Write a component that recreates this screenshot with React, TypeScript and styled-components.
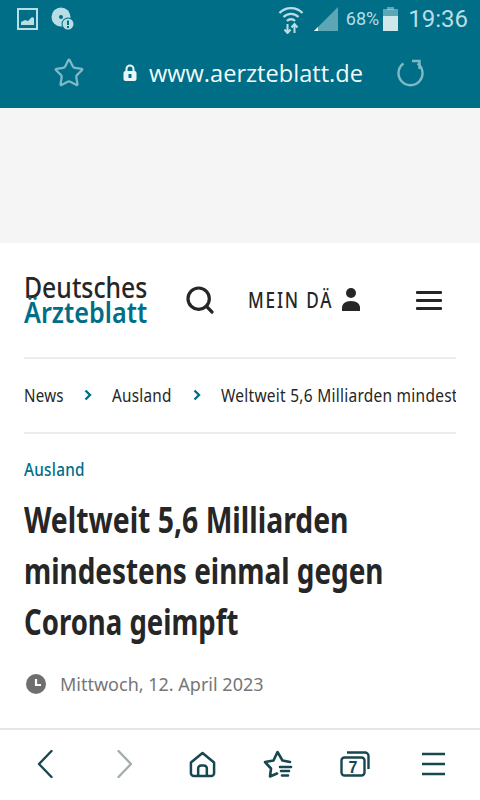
import styled, { createGlobalStyle } from "styled-components";
import { Search, Star } from "lucide-react";

const GlobalStyle = createGlobalStyle`
  html, body { margin: 0; padding: 0; background: #fff; }
  * { box-sizing: border-box; }
`;

const Page = styled.div`
  width: 480px;
  height: 800px;
  display: flex;
  flex-direction: column;
  overflow: hidden;
  font-family: "Noto Sans", sans-serif;
  color: #262626;
`;

// no condensed face is installed, so the narrow site font is squeezed by hand
const Squeezed = styled.span<{ $scale: number; $width: number }>`
  display: block;
  flex: none;
  width: ${({ $width }) => $width}px;
  white-space: nowrap;
  transform: scaleX(${({ $scale }) => $scale});
  transform-origin: left center;
`;

const TopBar = styled.header`
  height: 108px;
  background: #006e87;
  display: flex;
  flex-direction: column;
  flex: none;
`;

const StatusBar = styled.div`
  height: 37px;
  padding: 0 12px 0 17px;
  display: flex;
  align-items: center;
  color: #b9dde4;
`;

const StatusLeft = styled.div`
  display: flex;
  align-items: center;
  gap: 13px;
  flex: 1;
`;

const StatusRight = styled.div`
  display: flex;
  align-items: center;
`;

const Percent = styled.span`
  font-family: Roboto, sans-serif;
  font-size: 18px;
  margin: 0 4px 0 7px;
`;

const Clock = styled.span`
  font-family: Roboto, sans-serif;
  font-size: 24px;
  margin-left: 10px;
`;

const UrlRow = styled.div`
  height: 71px;
  padding: 0 53px;
  display: flex;
  align-items: center;
  color: #7fb9c6;
`;

const Url = styled.span`
  font-family: "Open Sans", sans-serif;
  font-size: 23.6px;
  color: #f2fafb;
  margin: 0 33px 0 12px;
  white-space: nowrap;
`;

const LockWrap = styled.span`
  display: flex;
  margin-left: 38px;
`;

const AdSlot = styled.div`
  height: 135px;
  background: #f5f5f5;
  flex: none;
`;

const Main = styled.main`
  flex: 1;
  padding: 0 24px;
  min-height: 0;
`;

const SiteHeader = styled.div`
  height: 116px;
  display: flex;
  align-items: center;
  border-bottom: 2px solid #ececec;
`;

const Logo = styled.div`
  font-weight: 500;
  font-size: 28px;
  line-height: 25px;
  width: 123px;
  margin-right: 37px;
`;

const LogoAccent = styled(Squeezed)`
  color: #006e87;
  font-weight: 600;
`;

const Account = styled.div`
  display: flex;
  align-items: center;
  margin-left: 32px;
  padding-bottom: 2px;
  font-weight: 500;
  font-size: 22px;
  letter-spacing: 2.3px;
`;

const Burger = styled.div`
  margin-left: auto;
  margin-right: 14px;
  width: 26px;
  height: 19px;
  display: flex;
  flex-direction: column;
  justify-content: space-between;
`;

const BurgerLine = styled.span`
  height: 3px;
  border-radius: 1px;
  background: #262626;
`;

const Crumbs = styled.nav`
  height: 75px;
  padding-bottom: 2px;
  display: flex;
  align-items: center;
  border-bottom: 2px solid #ececec;
  font-size: 18px;
  letter-spacing: 0.3px;
  overflow: hidden;
`;

const CrumbIcon = styled.svg`
  flex: none;
  width: 8px;
  height: 12px;
  margin: 0 20px 0 21px;
  color: #006e87;
`;

const Category = styled.div`
  margin-top: 24px;
  font-size: 18px;
  font-weight: 500;
  letter-spacing: 0.3px;
  color: #006e87;
  line-height: 22px;
`;

const Title = styled.h1`
  margin: 14px 0 0;
  font-size: 36px;
  line-height: 51px;
  font-weight: 700;
`;

const DateRow = styled.div`
  margin-top: 25px;
  display: flex;
  align-items: center;
  gap: 14px;
  padding-left: 2px;
  font-size: 18px;
  color: #767676;
`;

const BottomNav = styled.nav`
  height: 72px;
  flex: none;
  border-top: 2px solid #e6e6e6;
  background: #fff;
  padding: 0 0 2px 5px;
  display: grid;
  grid-template-columns: 80px 80px 75px 76px 78px 78px;
  align-items: center;
  justify-items: center;
`;

const NavSlot = styled.span<{ $dim?: boolean }>`
  display: flex;
  color: ${({ $dim }) => ($dim ? "#a3adaf" : "#17474f")};
`;

const PictureIcon = () => (
  <svg width="21" height="22" viewBox="0 0 21 22" fill="none">
    <rect x="1" y="1" width="19" height="20" stroke="currentColor" strokeWidth="2" />
    <path d="M4 17v-3l4-2 3 1 4-4 2 1v7z" fill="currentColor" />
  </svg>
);

const DiscIcon = () => (
  <svg width="24" height="24" viewBox="0 0 24 24">
    <circle cx="10" cy="10" r="9.500" fill="currentColor" />
    <circle cx="10" cy="10" r="2" fill="#006e87" />
    <circle cx="17" cy="17" r="6.500" fill="#006e87" />
    <circle cx="17" cy="17" r="5.500" fill="currentColor" />
    <rect x="16" y="13.500" width="2" height="4.500" fill="#006e87" />
    <rect x="16" y="19" width="2" height="2" fill="#006e87" />
  </svg>
);

const WifiIcon = () => (
  <svg width="26" height="30" viewBox="0 0 26 30" fill="none" stroke="currentColor">
    <path d="M1.500 9a16 16 0 0 1 23 0" strokeWidth="2.400" />
    <path d="M5.500 13a10.500 10.500 0 0 1 15 0" strokeWidth="2.400" />
    <path d="M9 17a5.500 5.500 0 0 1 8 0" strokeWidth="2.400" />
    <path d="M9.500 20v9M6.500 25.500l3 3.500 3-3.500M16.500 29v-9M13.500 23.500l3-3.500 3 3.500" strokeWidth="2" />
  </svg>
);

const SignalIcon = () => (
  <svg width="26" height="26" viewBox="0 0 26 26" style={{ marginLeft: 9 }}>
    <path d="M25 1v24H1z" fill="currentColor" opacity="0.5" />
    <path d="M1 25l4-4v4z" fill="#fff" />
  </svg>
);

const BatteryIcon = () => (
  <svg width="15" height="24" viewBox="0 0 15 24">
    <rect x="4" y="0" width="7" height="3" fill="currentColor" opacity="0.5" />
    <rect x="0" y="2" width="15" height="7" fill="currentColor" opacity="0.5" />
    <rect x="0" y="9" width="15" height="15" fill="#cfe6ea" />
  </svg>
);

const LockIcon = () => (
  <svg width="14" height="18" viewBox="0 0 14 18">
    <path d="M3.500 8V5a3.500 3.500 0 0 1 7 0v3" fill="none" stroke="#eaf5f7" strokeWidth="2" />
    <rect x="0.500" y="7" width="13" height="10" rx="2" fill="#eaf5f7" />
    <rect x="5.500" y="10" width="3" height="4" fill="#006e87" />
  </svg>
);

const ReloadIcon = () => (
  <svg width="28" height="28" viewBox="0 0 28 28" fill="none" stroke="currentColor" strokeWidth="2.400">
    <path d="M7.500 4.500a12 12 0 1 0 14 0" />
    <path d="M16 2h7.500v8" />
  </svg>
);

const UserIcon = () => (
  <svg width="18" height="23" viewBox="0 0 18 23" fill="currentColor" style={{ marginLeft: 11 }}>
    <circle cx="9" cy="5" r="5" />
    <path d="M0 23v-3c0-4 3-7 9-7s9 3 9 7v3z" />
  </svg>
);

const ClockIcon = () => (
  <svg width="20" height="20" viewBox="0 0 20 20">
    <circle cx="10" cy="10" r="10" fill="#6f6f6f" />
    <path d="M10 5v6h5" fill="none" stroke="#fff" strokeWidth="2.200" />
  </svg>
);

const Crumb = () => (
  <CrumbIcon viewBox="0 0 8 12" fill="none" stroke="currentColor" strokeWidth="2.400">
    <path d="M1.500 1.500L6 6l-4.500 4.500" />
  </CrumbIcon>
);

const BackIcon = () => (
  <svg width="16" height="30" viewBox="0 0 16 30" fill="none" stroke="currentColor" strokeWidth="2.400" strokeLinecap="round" strokeLinejoin="round">
    <path d="M14.500 2L2 15l12.500 13" />
  </svg>
);

const ForwardIcon = () => (
  <svg width="16" height="30" viewBox="0 0 16 30" fill="none" stroke="currentColor" strokeWidth="2.400" strokeLinecap="round" strokeLinejoin="round">
    <path d="M1.500 2L14 15 1.500 28" />
  </svg>
);

const HomeIcon = () => (
  <svg width="27" height="27" viewBox="0 0 28 28" fill="none" stroke="currentColor" strokeWidth="2.600" strokeLinejoin="round">
    <path d="M2 12L14 2l12 10v11a3 3 0 0 1-3 3H5a3 3 0 0 1-3-3z" />
    <path d="M9.500 26v-8a3 3 0 0 1 3-3h3a3 3 0 0 1 3 3v8" />
  </svg>
);

const StarListIcon = () => (
  <svg width="30" height="28" viewBox="0 0 30 28" fill="none" stroke="currentColor" strokeWidth="2.600" strokeLinejoin="round" strokeLinecap="round">
    <path d="M27 12l-7.500-1.500L14.500 2l-4 8.500L2 12l6 6.500L7 26.500l7-3" />
    <path d="M17 17h11M18 21h8M19 25.500h6" />
  </svg>
);

const TabsIcon = () => (
  <svg width="30" height="26" viewBox="0 0 30 26" fill="none" stroke="currentColor" strokeWidth="2.400" strokeLinejoin="round">
    <rect x="1.500" y="6.500" width="23" height="18" rx="3" />
    <path d="M7 1.500h18a3.500 3.500 0 0 1 3.500 3.500v13" />
    <text x="13" y="21.500" textAnchor="middle" fontFamily="Liberation Sans" fontWeight="700" fontSize="16" fill="currentColor" stroke="none">7</text>
  </svg>
);

const MenuIcon = () => (
  <svg width="23" height="24" viewBox="0 0 23 24" fill="none" stroke="currentColor" strokeWidth="2.400">
    <path d="M0 2h23M0 12h23M0 22h23" />
  </svg>
);

export default function App() {
  return (
    <Page>
      <GlobalStyle />
      <TopBar>
        <StatusBar>
          <StatusLeft>
            <PictureIcon />
            <DiscIcon />
          </StatusLeft>
          <StatusRight>
            <WifiIcon />
            <SignalIcon />
            <Percent>68%</Percent>
            <BatteryIcon />
            <Clock>19:36</Clock>
          </StatusRight>
        </StatusBar>
        <UrlRow>
          <Star size={32} strokeWidth={1.7} />
          <LockWrap>
            <LockIcon />
          </LockWrap>
          <Url>www.aerzteblatt.de</Url>
          <ReloadIcon />
        </UrlRow>
      </TopBar>
      <AdSlot />
      <Main>
        <SiteHeader>
          <Logo>
            <Squeezed $scale={0.885} $width={123}>Deutsches</Squeezed>
            <LogoAccent $scale={0.9} $width={123}>Ärzteblatt</LogoAccent>
          </Logo>
          <Search size={32} strokeWidth={2.4} />
          <Account>
            <Squeezed $scale={0.78} $width={83}>MEIN DÄ</Squeezed>
            <UserIcon />
          </Account>
          <Burger>
            <BurgerLine />
            <BurgerLine />
            <BurgerLine />
          </Burger>
        </SiteHeader>
        <Crumbs>
          <Squeezed $scale={0.84} $width={39}>News</Squeezed>
          <Crumb />
          <Squeezed $scale={0.85} $width={60}>Ausland</Squeezed>
          <Crumb />
          <Squeezed $scale={0.86} $width={235}>Weltweit 5,6 Milliarden mindestens einmal gegen Corona geimpft</Squeezed>
        </Crumbs>
        <Category>
          <Squeezed $scale={0.85} $width={61}>Ausland</Squeezed>
        </Category>
        <Title>
          <Squeezed $scale={0.787} $width={324}>Weltweit 5,6 Milliarden</Squeezed>
          <Squeezed $scale={0.775} $width={359}>mindestens einmal gegen</Squeezed>
          <Squeezed $scale={0.765} $width={214}>Corona geimpft</Squeezed>
        </Title>
        <DateRow>
          <ClockIcon />
          Mittwoch, 12. April 2023
        </DateRow>
      </Main>
      <BottomNav>
        <NavSlot>
          <BackIcon />
        </NavSlot>
        <NavSlot $dim>
          <ForwardIcon />
        </NavSlot>
        <NavSlot>
          <HomeIcon />
        </NavSlot>
        <NavSlot>
          <StarListIcon />
        </NavSlot>
        <NavSlot>
          <TabsIcon />
        </NavSlot>
        <NavSlot>
          <MenuIcon />
        </NavSlot>
      </BottomNav>
    </Page>
  );
}
